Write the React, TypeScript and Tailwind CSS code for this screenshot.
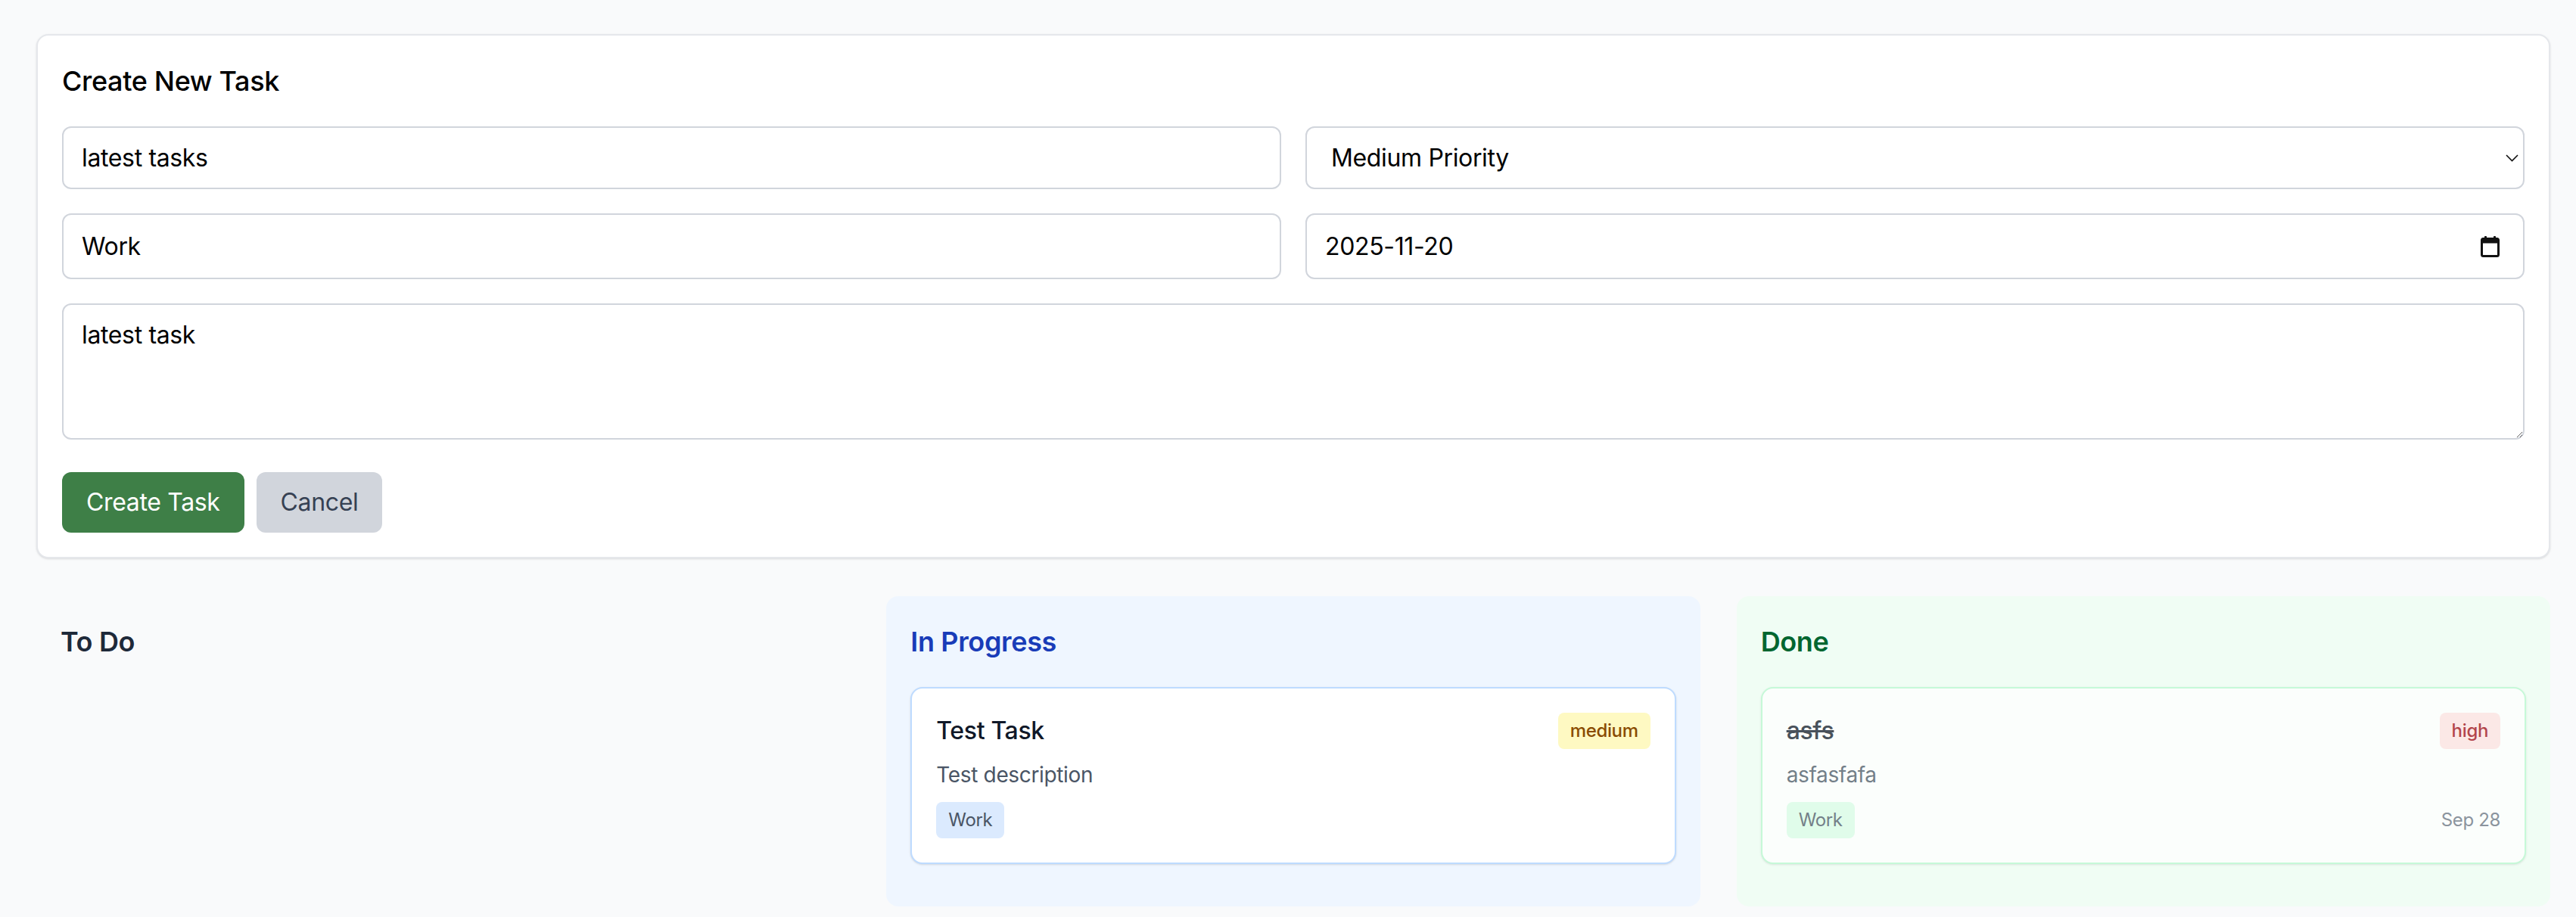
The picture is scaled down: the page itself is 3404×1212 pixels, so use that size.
import React from 'react';

type Task = {
  title: string;
  description: string;
  tag: string;
  priority: 'low' | 'medium' | 'high';
  date?: string;
  done?: boolean;
};

const columns: {
  name: string;
  box: string;
  heading: string;
  card: string;
  tag: string;
  tasks: Task[];
}[] = [
  {
    name: 'To Do',
    box: 'bg-gray-50',
    heading: 'text-gray-800',
    card: 'border-gray-200',
    tag: 'bg-gray-100',
    tasks: [],
  },
  {
    name: 'In Progress',
    box: 'bg-blue-50',
    heading: 'text-blue-800',
    card: 'border-blue-200',
    tag: 'bg-blue-100',
    tasks: [{ title: 'Test Task', description: 'Test description', tag: 'Work', priority: 'medium' }],
  },
  {
    name: 'Done',
    box: 'bg-green-50',
    heading: 'text-green-800',
    card: 'border-green-200',
    tag: 'bg-green-100',
    tasks: [{ title: 'asfs', description: 'asfasfafa', tag: 'Work', priority: 'high', date: 'Sep 28', done: true }],
  },
];

const priorityStyles = {
  low: 'bg-green-100 text-green-800',
  medium: 'bg-yellow-100 text-yellow-800',
  high: 'bg-red-100 text-red-800',
};

const inputClass =
  'w-full h-full rounded-xl border-2 border-gray-300 bg-white px-6 text-[32px] leading-12 text-black outline-none';

const App: React.FC = () => {
  return (
    <div className="min-h-screen bg-gray-50 pl-12 pr-[34px] pt-[45px] font-[family-name:Inter,sans-serif] tracking-[-0.022em]">
      {/* Create form */}
      <div className="mb-[50px] rounded-2xl border-2 border-gray-200 bg-white p-8 shadow-sm">
        <h2 className="mb-8 text-[36px] leading-14 font-medium text-black">Create New Task</h2>

        <div className="grid grid-cols-2 gap-8">
          <div className="h-[83px]">
            <input className={inputClass} defaultValue="latest tasks" />
          </div>
          <div className="relative h-[83px]">
            <select className={`${inputClass} appearance-none pl-[32px]`} defaultValue="medium">
              <option value="low">Low Priority</option>
              <option value="medium">Medium Priority</option>
              <option value="high">High Priority</option>
            </select>
            <svg
              className="pointer-events-none absolute right-2 top-1/2 -translate-y-1/2"
              width="17"
              height="10"
              viewBox="0 0 17 10"
              fill="none"
            >
              <path d="M1 1l7.5 7.5L16 1" stroke="#111" strokeWidth="1.6" />
            </svg>
          </div>

          <div className="h-[87px]">
            <input className={inputClass} defaultValue="Work" />
          </div>
          <div className="relative h-[87px]">
            <input className={inputClass} defaultValue="2025-11-20" />
            <svg
              className="pointer-events-none absolute right-[33px] top-1/2 -translate-y-1/2"
              width="25"
              height="28"
              viewBox="0 0 25 28"
              fill="none"
            >
              <rect x="5" y="0" width="3" height="5" rx="1" fill="#111" />
              <rect x="17" y="0" width="3" height="5" rx="1" fill="#111" />
              <rect x="1.5" y="3.5" width="22" height="23" rx="2" stroke="#111" strokeWidth="3" />
              <rect x="1.5" y="3.5" width="22" height="6" fill="#111" />
            </svg>
          </div>

          <textarea
            className="col-span-2 block h-[180px] w-full rounded-xl border-2 border-gray-300 bg-white px-6 py-4 text-[32px] leading-12 text-black outline-none"
            defaultValue="latest task"
            rows={3}
          />
        </div>

        <div className="mt-[43px] flex gap-4">
          <button className="h-20 rounded-xl bg-[#3e7f47] px-8 text-[32px] leading-12 text-white">Create Task</button>
          <button className="h-20 rounded-xl bg-gray-300 px-8 text-[32px] leading-12 text-gray-700">Cancel</button>
        </div>
      </div>

      {/* Board */}
      <div className="grid grid-cols-3 gap-12">
        {columns.map((col) => (
          <div key={col.name} className={`rounded-2xl p-8 ${col.box}`}>
            <h3 className={`mb-8 text-[36px] leading-14 font-semibold ${col.heading}`}>{col.name}</h3>
            {col.tasks.map((task) => (
              <div
                key={task.title}
                className={`mb-6 rounded-2xl border-2 bg-white p-8 shadow-sm ${col.card} ${task.done ? 'opacity-75' : ''}`}
              >
                <div className="mb-[14px] flex items-start justify-between">
                  <h4
                    className={`text-[32px] leading-12 font-medium text-gray-900 ${task.done ? 'line-through' : ''}`}
                  >
                    {task.title}
                  </h4>
                  <span className={`rounded-lg px-4 py-2 text-2xl font-medium ${priorityStyles[task.priority]}`}>
                    {task.priority}
                  </span>
                </div>
                <p className="mb-4 text-[28px] leading-10 text-gray-600">{task.description}</p>
                <div className="flex items-center justify-between">
                  <span className={`rounded-lg px-4 py-2 text-2xl text-gray-600 ${col.tag}`}>{task.tag}</span>
                  {task.date && <span className="text-2xl text-gray-500">{task.date}</span>}
                </div>
              </div>
            ))}
          </div>
        ))}
      </div>
    </div>
  );
};

export default App;
